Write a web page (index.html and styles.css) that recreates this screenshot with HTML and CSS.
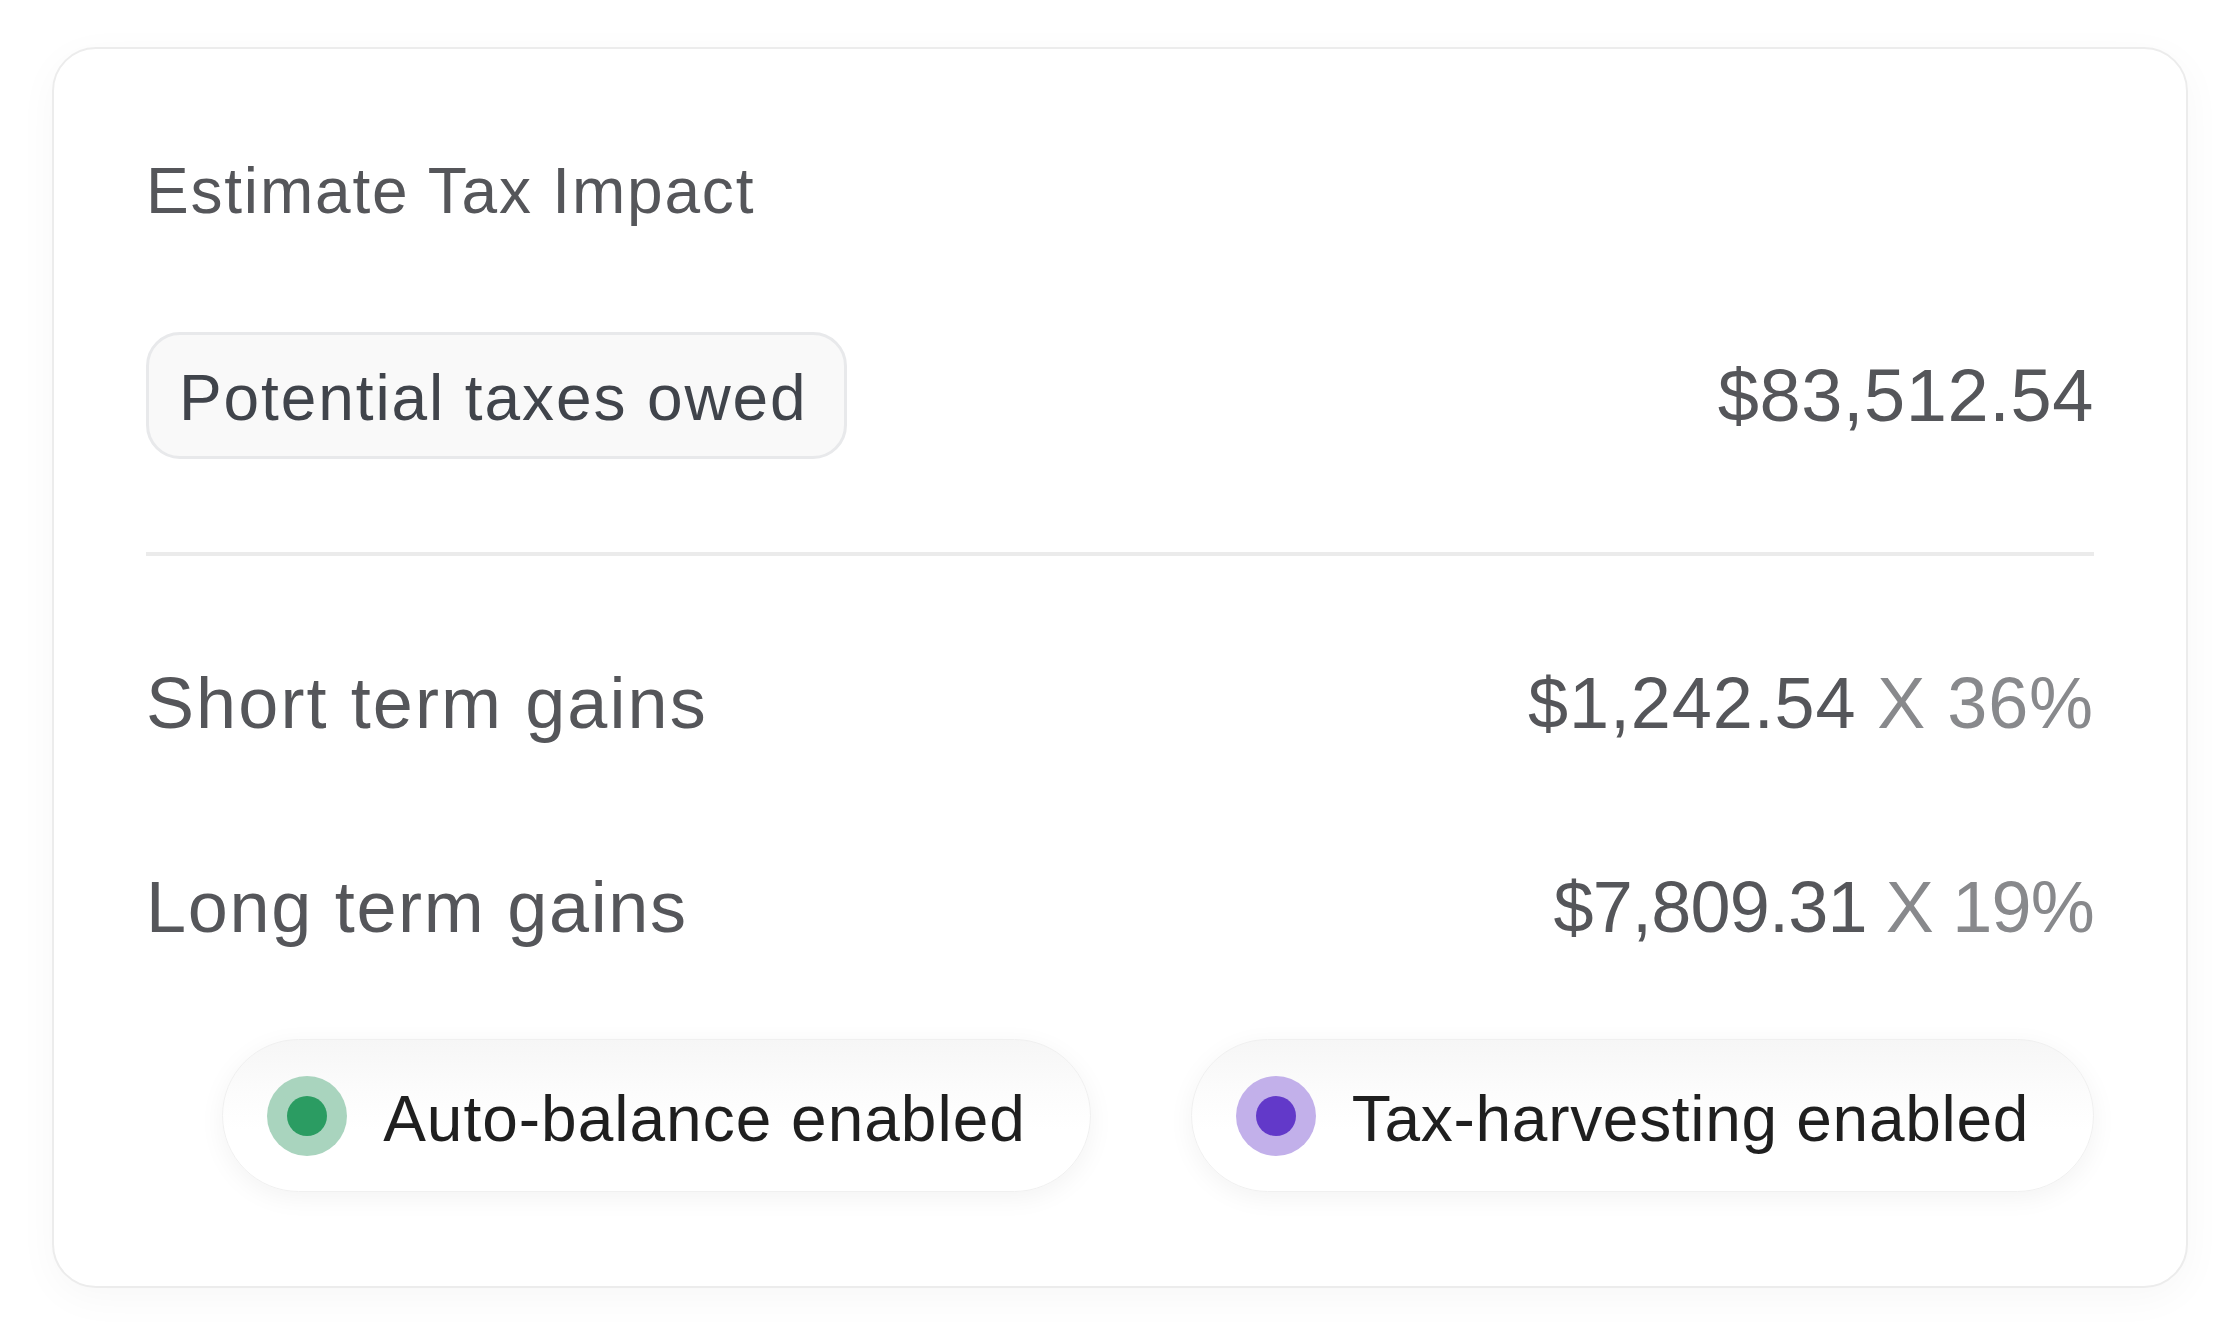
FILE: index.html
```html
<!DOCTYPE html>
<html lang="en">
<head>
<meta charset="utf-8">
<title>Estimate Tax Impact</title>
<link rel="stylesheet" href="styles.css">
</head>
<body>
  <section class="card">
    <h1 class="title">Estimate Tax Impact</h1>
    <div class="total-row">
      <span class="pill">Potential taxes owed</span>
      <span class="amount">$83,512.54</span>
    </div>
    <div class="divider"></div>
    <div class="gain-row first">
      <span class="label label-short">Short term gains</span>
      <span class="value">$1,242.54 <span class="rate">X 36%</span></span>
    </div>
    <div class="gain-row second">
      <span class="label">Long term gains</span>
      <span class="value value-tight">$7,809.31 <span class="rate">X 19%</span></span>
    </div>
    <div class="chips">
      <div class="chip chip-green">
        <span class="dot"><span class="dot-inner"></span></span>
        <span class="chip-text chip-text-wide">Auto-balance enabled</span>
      </div>
      <div class="chip chip-purple">
        <span class="dot"><span class="dot-inner"></span></span>
        <span class="chip-text">Tax-harvesting enabled</span>
      </div>
    </div>
  </section>
</body>
</html>
```

FILE: styles.css
```css
* { box-sizing: border-box; }

html, body { background: #ffffff; }

body {
  margin: 0;
  padding: 47px 52px 56px;
  font-family: "Liberation Sans", Arial, sans-serif;
  color: #55565a;
}

.card {
  background: #ffffff;
  border: 2px solid #ececec;
  border-radius: 44px;
  padding: 110px 92px 94px;
  box-shadow: 0 10px 40px rgba(0, 0, 0, 0.035);
}

.title {
  margin: 0 0 109px;
  font-size: 64px;
  line-height: 64px;
  font-weight: 400;
  letter-spacing: 1.8px;
  color: #55565a;
}

.total-row {
  display: flex;
  justify-content: space-between;
  align-items: center;
}

.pill {
  display: inline-block;
  height: 127px;
  padding: 31px 36px 26px 30px;
  border: 3px solid #e8e9eb;
  border-radius: 34px;
  background: #f9f9f9;
  font-size: 64px;
  line-height: 64px;
  letter-spacing: 1.9px;
  color: #40444b;
}

.amount {
  font-size: 74px;
  line-height: 74px;
  letter-spacing: 0.6px;
  color: #55565a;
}

.divider {
  height: 4px;
  margin-top: 93px;
  background: #ebebeb;
}

.gain-row {
  display: flex;
  justify-content: space-between;
  align-items: center;
  font-size: 72px;
  line-height: 72px;
}

.gain-row.first { margin-top: 111px; }
.gain-row.second { margin-top: 132px; }

.label {
  letter-spacing: 1.7px;
  color: #55565a;
}

.label-short { letter-spacing: 2.1px; }

.value {
  letter-spacing: 0.9px;
  color: #55565a;
}

.value-tight { letter-spacing: -0.8px; }

.rate {
  color: #88898c;
}

.chips {
  display: flex;
  justify-content: flex-end;
  gap: 100px;
  margin-top: 96px;
}

.chip {
  display: flex;
  align-items: center;
  gap: 36px;
  height: 153px;
  padding: 0 64px 0 44px;
  border: 1px solid #f0f0f0;
  border-radius: 77px;
  background: linear-gradient(to bottom, #f6f6f6 0%, #fcfcfc 35%, #ffffff 60%);
  box-shadow: 0 6px 26px rgba(0, 0, 0, 0.05);
}

.dot {
  display: flex;
  align-items: center;
  justify-content: center;
  width: 80px;
  height: 80px;
  border-radius: 50%;
  flex: none;
}

.dot-inner {
  width: 40px;
  height: 40px;
  border-radius: 50%;
}

.chip-green .dot { background: #a9d4be; }
.chip-green .dot-inner { background: #2b9c62; }
.chip-purple .dot { background: #c2b0ea; }
.chip-purple .dot-inner { background: #6239c9; }

.chip-text {
  padding-top: 6px;
  font-size: 64px;
  line-height: 64px;
  letter-spacing: 0.7px;
  color: #1f1f1f;
  white-space: nowrap;
}

.chip-text-wide { letter-spacing: 1px; }
```
